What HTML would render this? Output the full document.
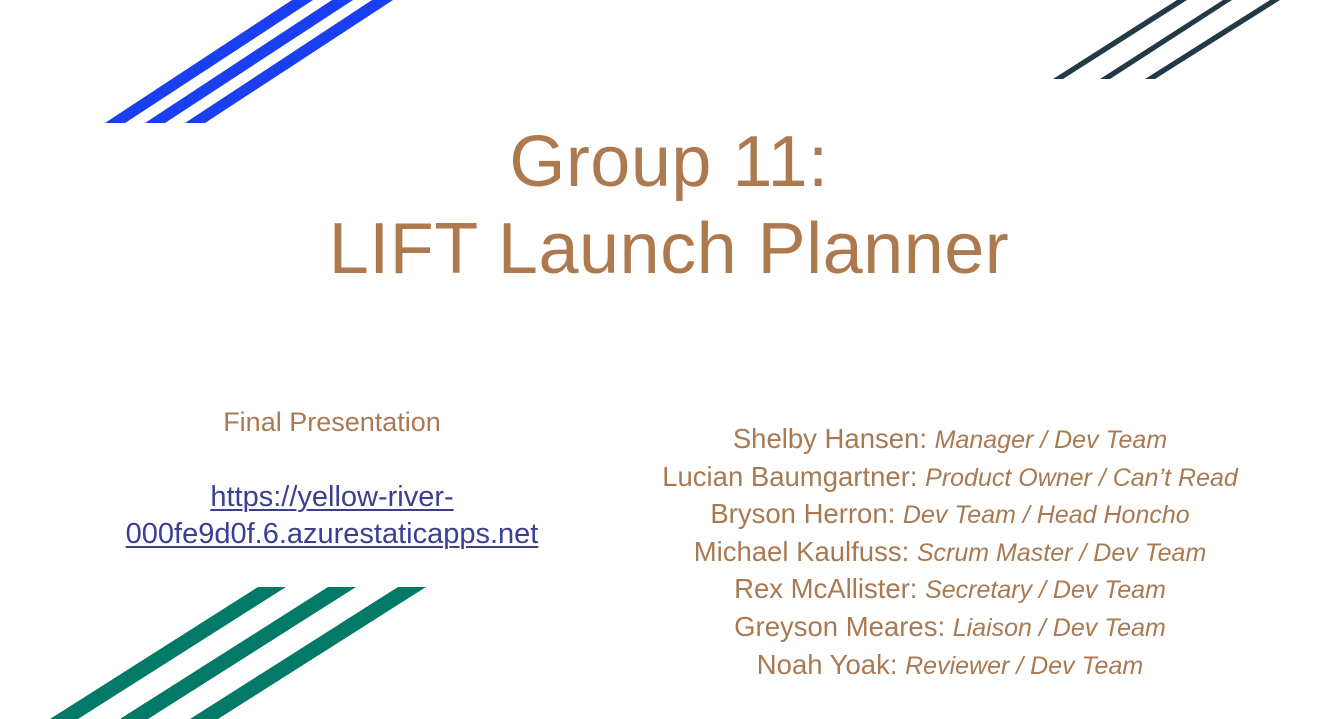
<!DOCTYPE html>
<html><head><meta charset="utf-8"><style>
html,body{margin:0;padding:0;background:#fff;}
body{width:1338px;height:719px;position:relative;overflow:hidden;font-family:"Liberation Sans",sans-serif;}
svg{position:absolute;left:0;top:0;}
.t{position:absolute;left:0;width:1338px;text-align:center;color:#AD7A50;font-size:72px;line-height:1;letter-spacing:0.5px;}
.c{position:absolute;text-align:center;color:#A97A52;white-space:nowrap;}
.r div{height:37.6px;line-height:37.6px;}
.c i{font-size:25px;line-height:1;}
a{color:#3A3F92;text-decoration:underline;text-decoration-thickness:2px;text-underline-offset:3px;}
</style></head><body>
<svg width="1338" height="719">
<g fill="#1A3FF0">
<polygon points="105,123 125,123 313,0 292,0"/>
<polygon points="145,123 165,123 353,0 332,0"/>
<polygon points="185,123 205,123 393,0 372,0"/>
</g>
<g fill="#223A45">
<polygon points="1053,79 1063,79 1187,0 1177,0"/>
<polygon points="1100,79 1110,79 1232,0 1223,0"/>
<polygon points="1145,79 1155,79 1280,0 1270,0"/>
</g>
<g fill="#027A67">
<polygon points="50,719 78,719 286,587 258,587"/>
<polygon points="120,719 148,719 356,587 328,587"/>
<polygon points="190,719 218,719 426,587 398,587"/>
</g>
</svg>
<div class="t" style="top:126px;">Group 11:</div>
<div class="t" style="top:213px;">LIFT Launch Planner</div>
<div class="c" style="left:82px;width:500px;top:407px;font-size:27px;line-height:30px;">Final Presentation</div>
<div class="c" style="left:32px;width:600px;top:479px;font-size:29px;line-height:37px;"><a>https://yellow-river-<br>000fe9d0f.6.azurestaticapps.net</a></div>
<div class="c r" style="left:550px;width:800px;top:420px;font-size:27.5px;">
<div>Shelby Hansen: <i>Manager / Dev Team</i></div>
<div>Lucian Baumgartner: <i>Product Owner / Can’t Read</i></div>
<div>Bryson Herron: <i>Dev Team / Head Honcho</i></div>
<div>Michael Kaulfuss: <i>Scrum Master / Dev Team</i></div>
<div>Rex McAllister: <i>Secretary / Dev Team</i></div>
<div>Greyson Meares: <i>Liaison / Dev Team</i></div>
<div>Noah Yoak: <i>Reviewer / Dev Team</i></div>
</div>
</body></html>
